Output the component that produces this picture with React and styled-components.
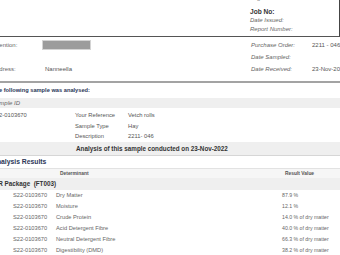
import React from 'react'
import styled, { createGlobalStyle } from 'styled-components'

const GlobalStyle = createGlobalStyle`
  html, body {
    margin: 0;
    padding: 0;
    background: #fff;
    overflow: hidden;
  }
  body {
    width: 340px;
    height: 255px;
    font-family: "Liberation Sans", Arial, sans-serif;
  }
`

const Page = styled.div`
  width: 348px;
  margin-left: -8px;
  color: #555;
  font-size: 6px;
`

const Header = styled.div`
  box-sizing: border-box;
  height: 37px;
  padding-left: 258px;
  border-right: 1px solid #444;
  border-bottom: 1px solid #555;
  display: flex;
  flex-direction: column;
  overflow: hidden;
`

const HeadLine = styled.div`
  height: 9px;
  line-height: 9px;
  white-space: nowrap;
  font-size: ${p => (p.$bold ? '6.6px' : '6px')};
  font-weight: ${p => (p.$bold ? 700 : 400)};
  font-style: ${p => (p.$bold ? 'normal' : 'italic')};
  color: ${p => (p.$bold ? '#333' : '#666')};
  &:first-child { margin-top: -6px; margin-bottom: 3.5px; }
`

const InfoGrid = styled.div`
  display: grid;
  grid-template-columns: 51px 208px 61px 1fr;
  grid-auto-rows: 12px;
  align-items: center;
  padding: 2px 0 6px;
  border-bottom: 2px solid #a3a3a3;
  white-space: nowrap;
`

const Label = styled.div`
  font-style: ${p => (p.$italic ? 'italic' : 'normal')};
  color: #666;
`

const Value = styled.div`
  padding-left: ${p => p.$pad || 0}px;
  color: #555;
`

const Redacted = styled.div`
  width: 47px;
  height: 8px;
  background: #9c9c9c;
  outline: 1px solid #d4d4d4;
`

const SectionTitle = styled.div`
  height: ${p => p.$h}px;
  line-height: ${p => p.$h}px;
  font-size: ${p => p.$size}px;
  font-weight: 700;
  color: #2c3757;
  white-space: nowrap;
`

const Band = styled.div`
  height: ${p => p.$h}px;
  line-height: ${p => p.$h}px;
  padding-left: ${p => p.$pad || 0}px;
  background: #efefef;
  border-bottom: ${p => (p.$line ? '1px solid #d6d6d6' : 'none')};
  font-size: ${p => p.$size || 6}px;
  font-weight: ${p => (p.$bold ? 700 : 400)};
  font-style: ${p => (p.$italic ? 'italic' : 'normal')};
  color: ${p => (p.$bold ? '#333' : '#666')};
  white-space: nowrap;
`

const DetailGrid = styled.div`
  display: grid;
  grid-template-columns: 83px 53px 1fr;
  grid-auto-rows: 10.5px;
  align-items: center;
  padding: 2px 0 0.5px;
  font-size: 5.8px;
  color: #555;
  white-space: nowrap;
`

const TableHead = styled.div`
  display: grid;
  grid-template-columns: 68px 225px 1fr;
  height: 9px;
  line-height: 9px;
  background: #f6f6f6;
  border-top: 1px solid #e2e2e2;
  font-size: 4.9px;
  font-weight: 700;
  color: #555;
  white-space: nowrap;
`

const ResultRow = styled.div`
  display: grid;
  grid-template-columns: 64px 226px 1fr;
  height: 11px;
  line-height: 11px;
  font-size: 5.7px;
  color: #666;
  white-space: nowrap;
`

const Cell = styled.div`
  padding-left: ${p => p.$pad || 0}px;
  font-size: ${p => (p.$size ? `${p.$size}px` : 'inherit')};
`

const results = [
  ['Dry Matter', '87.9 %'],
  ['Moisture', '12.1 %'],
  ['Crude Protein', '14.0 % of dry matter'],
  ['Acid Detergent Fibre', '40.0 % of dry matter'],
  ['Neutral Detergent Fibre', '66.3 % of dry matter'],
  ['Digestibility (DMD)', '38.2 % of dry matter'],
]

export default function App() {
  return (
    <>
      <GlobalStyle />
      <Page>
        <Header>
          <HeadLine>Page 1 of 2</HeadLine>
          <HeadLine $bold>Job No:</HeadLine>
          <HeadLine>Date Issued:</HeadLine>
          <HeadLine>Report Number:</HeadLine>
        </Header>

        <InfoGrid>
          <Label>Attention:</Label>
          <Value><Redacted /></Value>
          <Label $italic>Purchase Order:</Label>
          <Value>2211 - 046</Value>

          <Label />
          <Value />
          <Label $italic>Date Sampled:</Label>
          <Value />

          <Label>Address:</Label>
          <Value $pad={2}>Nanneella</Value>
          <Label $italic>Date Received:</Label>
          <Value>23-Nov-2022</Value>
        </InfoGrid>

        <SectionTitle $h={15} $size={5.7}>The following sample was analysed:</SectionTitle>
        <Band $h={10} $italic>Sample ID</Band>

        <DetailGrid>
          <div>S22-0103670</div>
          <div>Your Reference</div>
          <div>Vetch rolls</div>
          <div />
          <div>Sample Type</div>
          <div>Hay</div>
          <div />
          <div>Description</div>
          <div>2211- 046</div>
        </DetailGrid>

        <Band $h={13} $pad={84} $bold $line $size={6.3}>
          Analysis of this sample conducted on 23-Nov-2022
        </Band>

        <SectionTitle $h={12} $size={6.8}>Analysis Results</SectionTitle>

        <TableHead>
          <Cell />
          <Cell>Determinant</Cell>
          <Cell>Result Value</Cell>
        </TableHead>
        <Band $h={12} $bold $size={6.3}>NIR Package&nbsp;&nbsp;(FT003)</Band>

        {results.map(([name, value]) => (
          <ResultRow key={name}>
            <Cell $pad={21}>S22-0103670</Cell>
            <Cell>{name}</Cell>
            <Cell $size={5.2}>{value}</Cell>
          </ResultRow>
        ))}
      </Page>
    </>
  )
}
